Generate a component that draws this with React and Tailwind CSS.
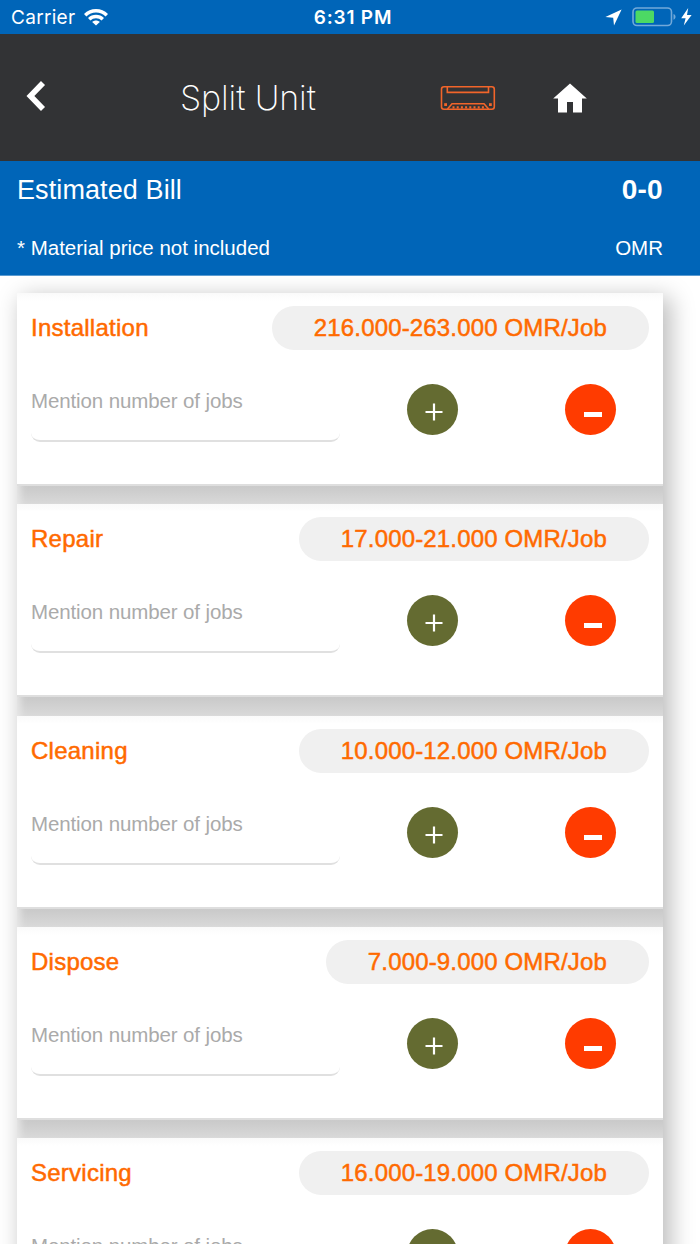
const jobs = [
  { name: 'Installation', price: '216.000-263.000 OMR/Job' },
  { name: 'Repair', price: '17.000-21.000 OMR/Job' },
  { name: 'Cleaning', price: '10.000-12.000 OMR/Job' },
  { name: 'Dispose', price: '7.000-9.000 OMR/Job' },
  { name: 'Servicing', price: '16.000-19.000 OMR/Job' },
];

function StatusBar() {
  return (
    <div className="grid h-[34px] grid-cols-3 items-center bg-[#0065b8] pl-[11px] pr-[8px] pt-[2px] font-['Inter',sans-serif] text-[19px]">
      <div className="flex items-center gap-[9px]">
        <span className="tracking-[0.3px]">Carrier</span>
        <svg className="mb-[2px]" width="24" height="17" viewBox="0 0 24 17" fill="none" stroke="white" strokeWidth="3.4">
          <path d="M1.2 6.3C7.2 .3 16.8 .3 22.8 6.3" />
          <path d="M5.2 10.2C9 6.5 15 6.5 18.8 10.2" />
          <path d="M12 16.6L8.2 12.9C10.3 10.9 13.7 10.9 15.8 12.9Z" fill="white" stroke="none" />
        </svg>
      </div>
      <span className="pl-[3px] text-center font-semibold tracking-[0.8px]">6:31 PM</span>
      <div className="flex items-center justify-end pb-[2px]">
        <svg className="mr-[10px]" width="17" height="17" viewBox="0 0 17 17" fill="white">
          <path d="M16.6 .4L9 16.4L8.2 8.8L.4 8.1Z" />
        </svg>
        <svg width="44" height="20" viewBox="0 0 44 20" fill="none">
          <rect x="1" y="1" width="38.5" height="17.5" rx="4" stroke="#72a9d9" strokeWidth="1.6" />
          <rect x="3.5" y="3.5" width="18.5" height="12.5" rx="1.5" fill="#4cd964" />
          <path d="M41.5 7C44.2 7.7 44.2 12 41.5 12.7Z" fill="#72a9d9" />
        </svg>
        <svg className="ml-[5px]" width="11" height="18" viewBox="0 0 11 18" fill="white">
          <path d="M7.2 0L.2 10.2H4.6L2.8 17.5L10.6 7.1H6Z" />
        </svg>
      </div>
    </div>
  );
}

function SplitUnitIcon() {
  return (
    <svg width="56" height="26" viewBox="0 0 56 26" fill="none" stroke="#f2652a" strokeWidth="1.6">
      <rect x="1.5" y="1.8" width="52.8" height="22.4" rx="2.5" />
      <path d="M7.3 2V7.4H48.5V2" />
      <path d="M7.5 24L12 18.8H44L48.6 24" />
      <path d="M12.5 22.4H44.5" strokeWidth="2.4" strokeDasharray="2 2.2" />
      <rect x="4.2" y="18.2" width="2.8" height="2.8" fill="#f2652a" stroke="none" />
      <rect x="49" y="18.2" width="2.8" height="2.8" fill="#f2652a" stroke="none" />
    </svg>
  );
}

function Header() {
  return (
    <div className="flex h-[127px] items-center bg-[#323335]">
      <button className="ml-[26px] mb-[4px]">
        <svg width="20" height="30" viewBox="0 0 20 30" fill="none" stroke="white" strokeWidth="5.6">
          <path d="M17 2L4.4 15L17 28" />
        </svg>
      </button>
      <h1 className="ml-[134px] w-[260px] font-['Inter',sans-serif] text-[34px] font-[250] tracking-[-0.1px]">
        Split Unit
      </h1>
      <SplitUnitIcon />
      <button className="ml-[57px]">
        <svg width="34" height="30" viewBox="0 0 34 30" fill="white">
          <path d="M17 .5L33.8 15.5H29V29.5H20V19H14V29.5H5V15.5H.2Z" />
        </svg>
      </button>
    </div>
  );
}

function Bill() {
  return (
    <div className="h-[115px] border-b border-[#5a9bd1] bg-[#0065b8] pl-[17px] pr-[37px] pt-[9px]">
      <div className="flex h-[40px] items-center justify-between text-[27px]">
        <span className="tracking-[0.1px]">Estimated Bill</span>
        <span className="text-[28px] font-bold tracking-[0.3px]">0-0</span>
      </div>
      <div className="mt-[18px] flex h-[40px] items-center justify-between text-[20.5px]">
        <span>* Material price not included</span>
        <span>OMR</span>
      </div>
    </div>
  );
}

function JobCard({ name, price }) {
  return (
    <div className="h-[211.25px] shrink-0">
      <div className="h-[193px] border-b-2 border-[#dedede] bg-white bg-linear-to-b from-[#fafafa] to-white to-[8px] px-[14px] pt-[13px]">
        <div className="flex items-center justify-between text-[24px] text-[#ff6a00] [-webkit-text-stroke:0.5px_#ff6a00]">
          <span className="tracking-[0.25px]">{name}</span>
          <span className="flex h-[44px] items-center rounded-full bg-[#f0f0f0] px-[42px] tracking-[0.16px]">{price}</span>
        </div>
        <div className="flex pt-[31px]">
          <input
            className="h-[61px] w-[309px] rounded-[9px] border-b-2 border-[#e0e0e0] pb-[19px] text-[20.5px] tracking-[-0.12px] placeholder:text-[#aaaaaa]"
            placeholder="Mention number of jobs"
          />
          <button className="ml-[67px] mt-[3px] flex h-[51px] w-[51px] items-center justify-center rounded-full bg-[#646b31] pl-[3px] pt-[5px]">
            <svg width="18" height="18" viewBox="0 0 18 18" stroke="white" strokeWidth="2.2">
              <path d="M9 .5V17.5M.5 9H17.5" />
            </svg>
          </button>
          <button className="ml-[106.5px] mt-[3px] flex h-[51px] w-[51px] items-center justify-center rounded-full bg-[#ff3b00] pl-[6px] pt-[10px]">
            <span className="h-[5px] w-[18px] bg-white" />
          </button>
        </div>
      </div>
      {/* shaded gap under the card */}
      <div className="h-[18.25px] bg-linear-to-b from-[#c9c9c9] to-[#d9d9d9] shadow-[inset_9px_0_7px_-6px_#e9e9e9]" />
    </div>
  );
}

export default function App() {
  return (
    <div className="flex h-[1244px] w-[700px] flex-col overflow-hidden bg-white font-['Liberation_Sans',Arial,sans-serif]">
      <div className="text-white">
        <StatusBar />
        <Header />
        <Bill />
      </div>
      <div className="min-h-0 flex-1 overflow-hidden pl-[17px] pr-[37px] pt-[17px]">
        <div className="flex flex-col shadow-[6px_6px_22px_2px_rgba(0,0,0,0.26)]">
          {jobs.map((job) => (
            <JobCard key={job.name} name={job.name} price={job.price} />
          ))}
        </div>
      </div>
    </div>
  );
}
